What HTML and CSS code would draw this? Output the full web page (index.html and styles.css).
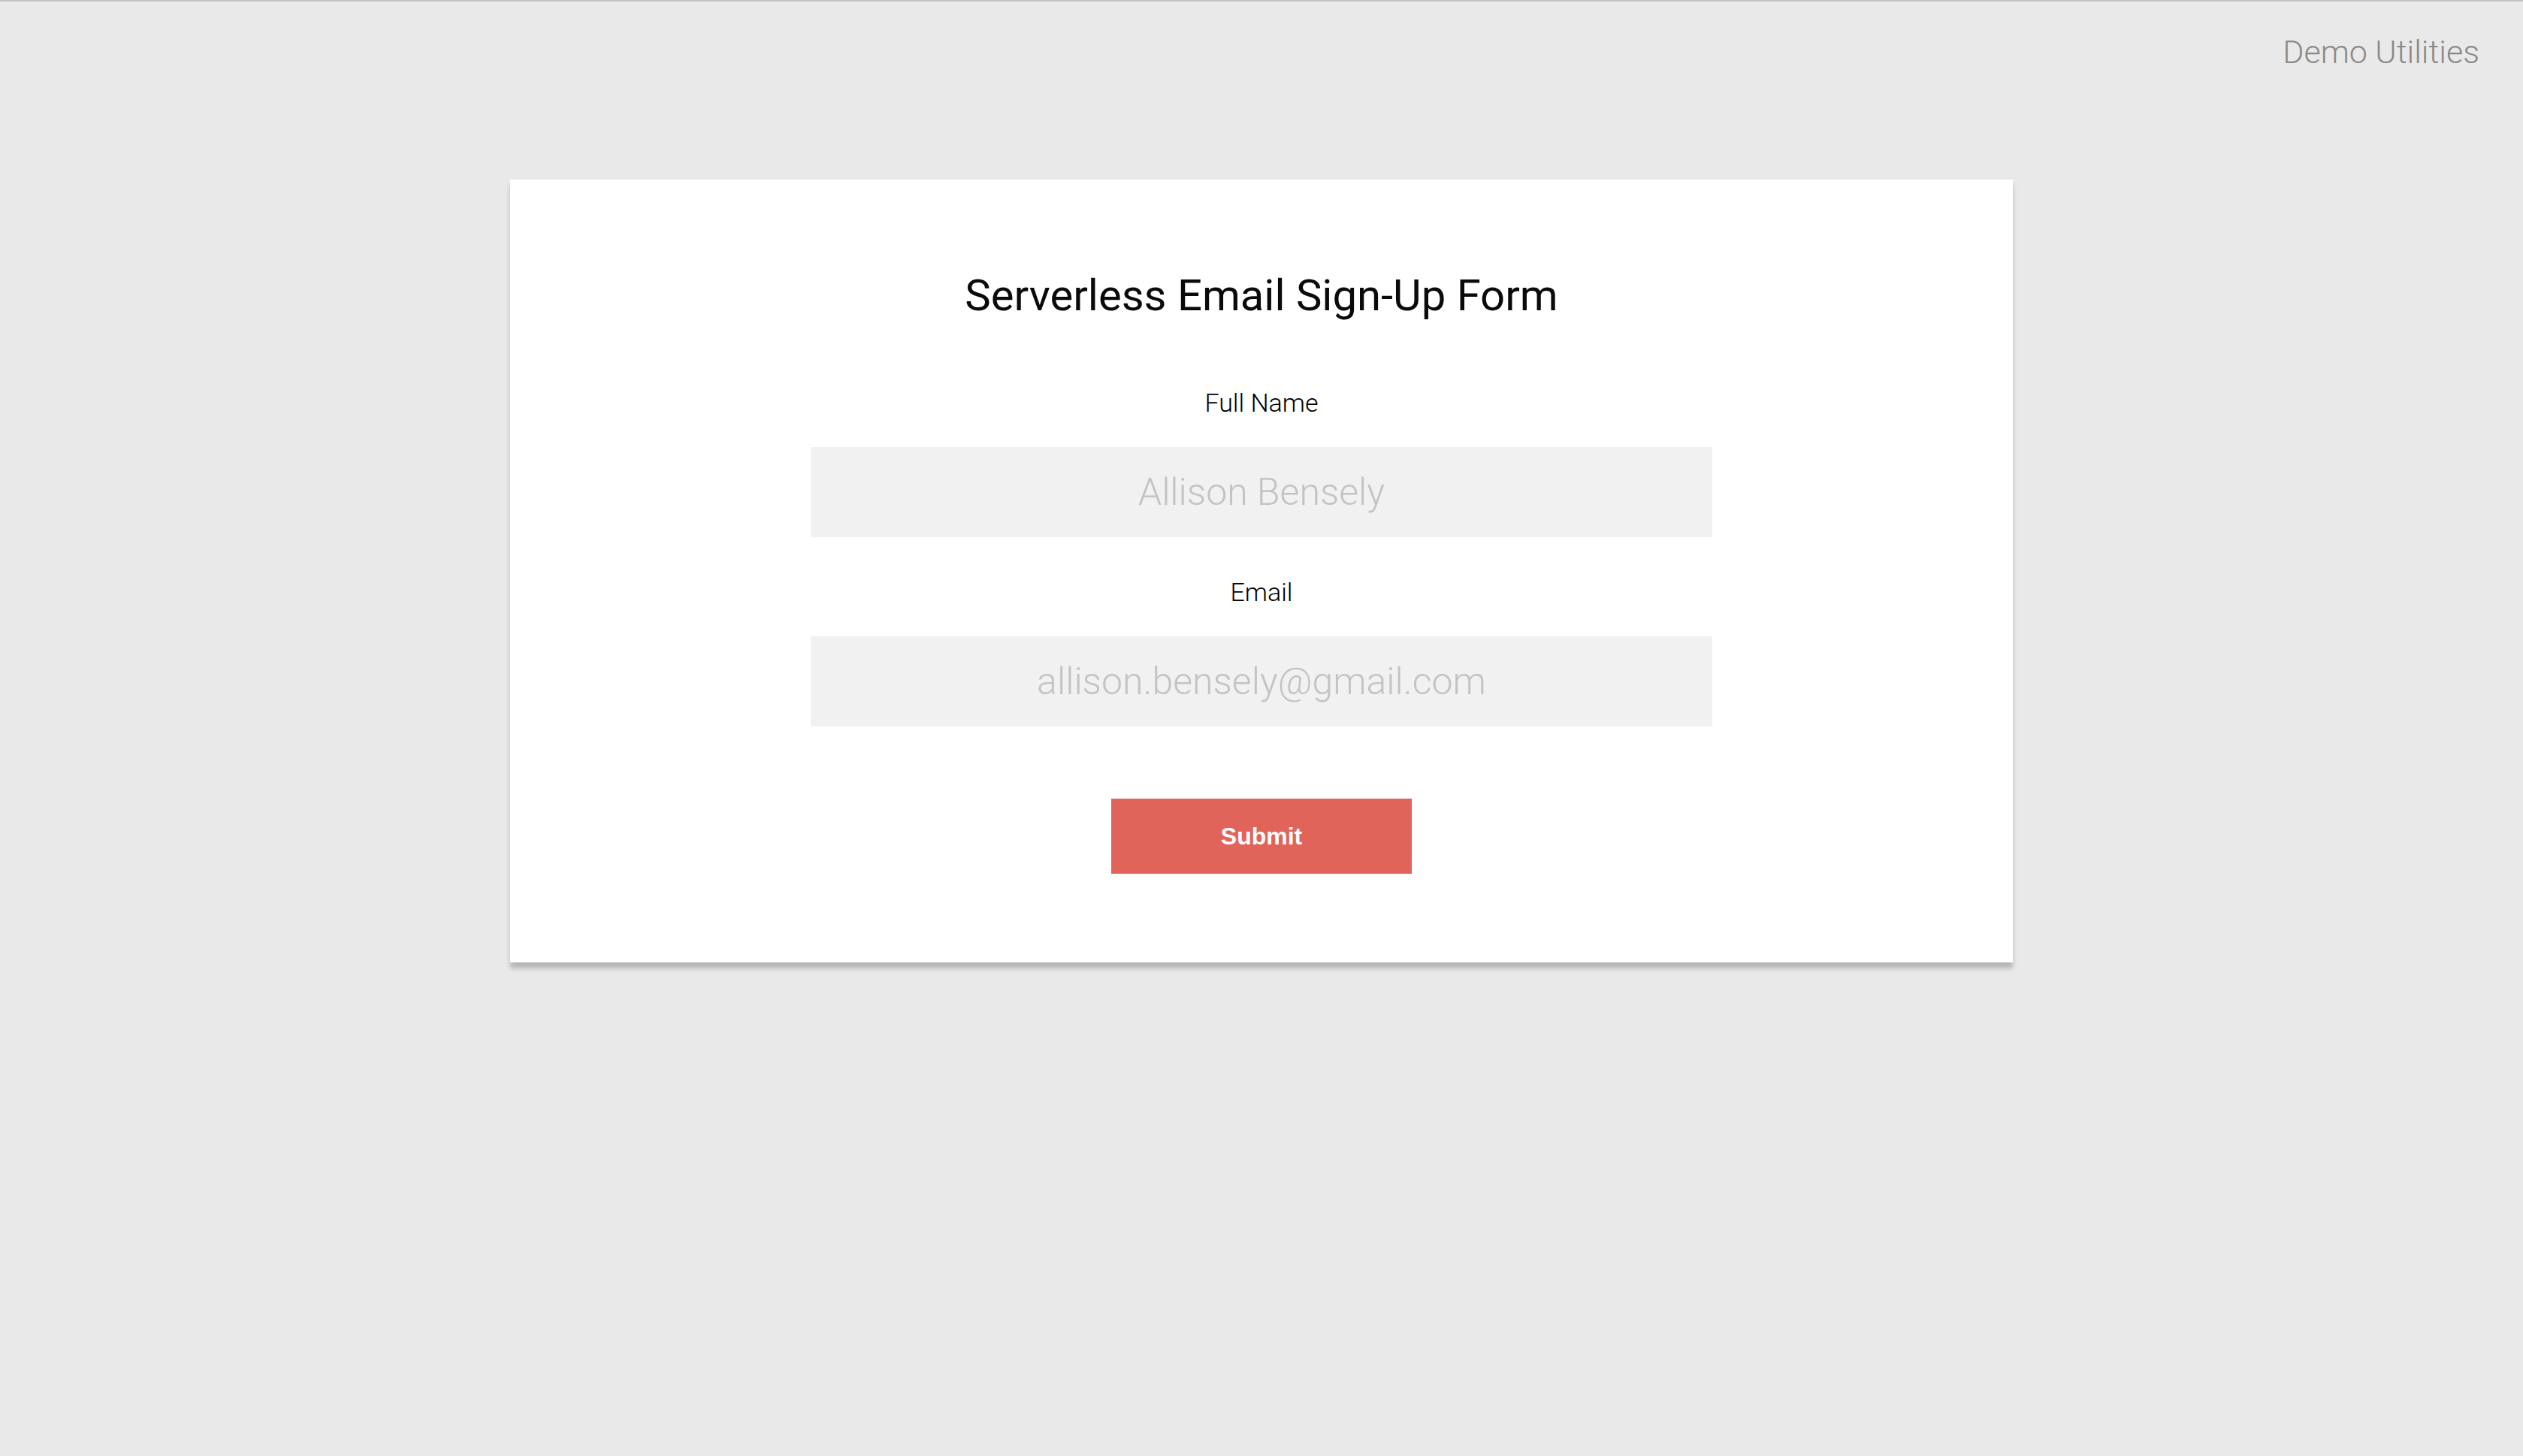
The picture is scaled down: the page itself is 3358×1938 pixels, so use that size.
FILE: index.html
```html
<!DOCTYPE html>
<html lang="en">
<head>
<meta charset="utf-8">
<title>Serverless Email Sign-Up Form</title>
<link rel="stylesheet" href="styles.css">
</head>
<body>
<header class="topbar">
  <span class="brand">Demo Utilities</span>
</header>
<main class="page">
  <form class="card">
    <h1 class="title">Serverless Email Sign-Up Form</h1>
    <label class="label" for="name">Full Name</label>
    <input class="field" id="name" type="text" placeholder="Allison Bensely">
    <label class="label label-email" for="email">Email</label>
    <input class="field" id="email" type="email" placeholder="allison.bensely@gmail.com">
    <button class="submit" type="button">Submit</button>
  </form>
</main>
</body>
</html>
```

FILE: styles.css
```css
html, body {
  margin: 0;
  padding: 0;
}

body {
  background: #e9e9e9;
  border-top: 2px solid #c2c2c2;
  min-height: 1936px;
  font-family: Roboto, "Liberation Sans", Arial, sans-serif;
}

.topbar {
  display: flex;
  justify-content: flex-end;
  padding: 43px 58px 0 0;
}

.brand {
  font-size: 43px;
  line-height: 48px;
  font-weight: 300;
  color: #8a8a8a;
}

.page {
  display: flex;
  justify-content: center;
  padding-top: 146px;
}

.card {
  width: 2000px;
  box-sizing: border-box;
  background: #ffffff;
  box-shadow: 0 8px 6px rgba(0, 0, 0, 0.22);
  display: flex;
  flex-direction: column;
  align-items: center;
  padding: 122px 0 118px;
}

.title {
  margin: 0;
  font-size: 58px;
  line-height: 64px;
  font-weight: 400;
  color: #0a0a0a;
}

.label {
  display: block;
  margin-top: 91px;
  font-size: 34px;
  line-height: 40px;
  font-weight: 300;
  color: #000000;
}

.label-email {
  margin-top: 53px;
}

.field {
  margin-top: 39px;
  width: 1200px;
  height: 120px;
  box-sizing: border-box;
  border: none;
  outline: none;
  background: #f1f1f1;
  text-align: center;
  font-family: Roboto, "Liberation Sans", Arial, sans-serif;
  font-size: 50px;
  font-weight: 300;
  color: #333333;
  padding: 0;
}

.field::placeholder {
  color: #c3c3c3;
  opacity: 1;
}

.submit {
  margin-top: 96px;
  width: 400px;
  height: 100px;
  border: none;
  background: #e0645a;
  color: #ffffff;
  font-family: "Liberation Sans", Arial, sans-serif;
  font-size: 32px;
  font-weight: 700;
  cursor: pointer;
}
```
